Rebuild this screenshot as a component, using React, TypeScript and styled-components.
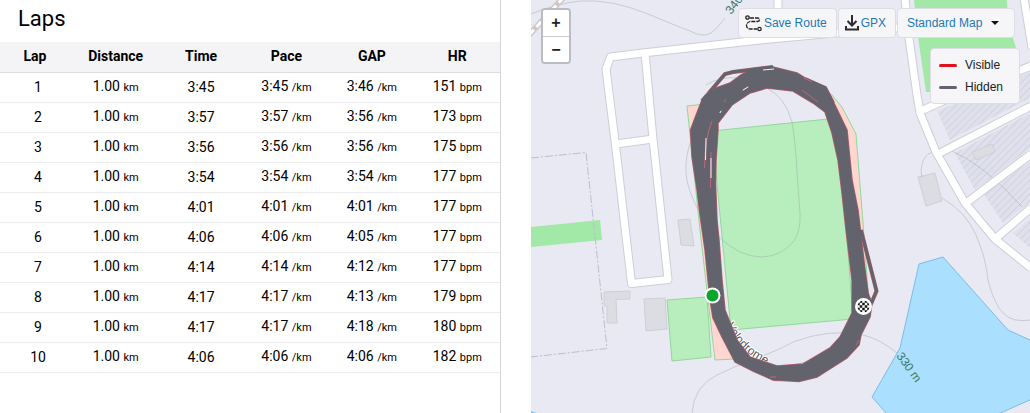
import React from 'react';
import styled, { createGlobalStyle } from 'styled-components';

interface Lap {
  time: string;
  gap: string;
  heartRate: number;
}

const LAPS: Lap[] = [
  { time: '3:45', gap: '3:46', heartRate: 151 },
  { time: '3:57', gap: '3:56', heartRate: 173 },
  { time: '3:56', gap: '3:56', heartRate: 175 },
  { time: '3:54', gap: '3:54', heartRate: 177 },
  { time: '4:01', gap: '4:01', heartRate: 177 },
  { time: '4:06', gap: '4:05', heartRate: 177 },
  { time: '4:14', gap: '4:12', heartRate: 177 },
  { time: '4:17', gap: '4:13', heartRate: 179 },
  { time: '4:17', gap: '4:18', heartRate: 180 },
  { time: '4:06', gap: '4:06', heartRate: 182 },
];

const COLUMNS = ['Lap', 'Distance', 'Time', 'Pace', 'GAP', 'HR'];

const GlobalStyle = createGlobalStyle`
  *, *::before, *::after {
    box-sizing: border-box;
  }

  body {
    margin: 0;
    background-color: #fff;
    color: #000;
    font-family: Roboto, 'Liberation Sans', sans-serif;
  }
`;

const Page = styled.main`
  display: grid;
  grid-template-columns: minmax(0, 501fr) minmax(0, 499fr);
  column-gap: 30px;
  min-height: 100vh;
`;

const LapsPanel = styled.section`
  border-right: 1px solid #d3d3da;
`;

const Heading = styled.h2`
  margin: 0;
  padding: 4px 18px 8px;
  font-size: 22px;
  line-height: 30px;
  font-weight: 400;
`;

const Table = styled.table`
  width: 100%;
  border-collapse: separate;
  border-spacing: 0;
  table-layout: fixed;
  font-size: 14px;
  text-align: center;
`;

const HeaderCell = styled.th<{ $first?: boolean }>`
  width: ${(props) => (props.$first ? '73px' : 'auto')};
  height: 31px;
  padding: ${(props) => (props.$first ? '0 3px 2px 0' : '0 0 2px')};
  border-bottom: 1px solid #dcdce2;
  background-color: #f4f4f7;
  line-height: 20px;
  font-weight: 700;
`;

const Cell = styled.td<{ $first?: boolean }>`
  height: 30px;
  padding: ${(props) => (props.$first ? '0 0 2px 3px' : '0 0 2px')};
  border-bottom: 1px solid #ececef;
  line-height: 20px;
`;

const Unit = styled.small`
  font-size: 11px;
`;

const MapPanel = styled.section`
  position: relative;
  overflow: hidden;
  background-color: #e8e9f2;
  font-family: 'Liberation Sans', Arial, sans-serif;
  font-size: 12px;
`;

const MapCanvas = styled.svg`
  display: block;
  width: 100%;
  height: 100%;
`;

const ZoomControl = styled.div`
  position: absolute;
  top: 8px;
  left: 10px;
  display: flex;
  flex-direction: column;
  border: 2px solid #bcbdc4;
  border-radius: 4px;
  overflow: hidden;
`;

const ZoomButton = styled.button`
  width: 26px;
  height: 26px;
  padding: 0;
  border: 0;
  background-color: #fff;
  color: #222;
  font: bold 16px/24px 'Liberation Sans', Arial, sans-serif;
  cursor: pointer;

  & + & {
    border-top: 1px solid #ccc;
  }
`;

const Toolbar = styled.div`
  position: absolute;
  top: 8px;
  right: 15px;
  display: flex;
  gap: 1px;
`;

const ToolButton = styled.button`
  display: flex;
  align-items: center;
  gap: 2px;
  height: 30px;
  padding: 0 9px 0 6px;
  border: 1px solid #dcdde5;
  border-radius: 4px;
  background-color: #f6f6f9;
  color: #2378b4;
  font: 12px/18px 'Liberation Sans', Arial, sans-serif;
  text-decoration: none;
  cursor: pointer;
`;

const SelectWrapper = styled.div`
  display: grid;
  align-items: center;

  > * {
    grid-area: 1 / 1;
  }
`;

const MapSelect = styled.select`
  appearance: none;
  width: 118px;
  height: 30px;
  padding: 0 24px 0 9px;
  border: 1px solid #dcdde5;
  border-radius: 4px;
  background-color: #f6f6f9;
  color: #2378b4;
  font: 12px/18px 'Liberation Sans', Arial, sans-serif;
  cursor: pointer;
`;

const Caret = styled.svg`
  justify-self: end;
  margin-right: 16px;
  pointer-events: none;
`;

const Legend = styled.ul`
  position: absolute;
  top: 48px;
  right: 10px;
  width: 90px;
  margin: 0;
  padding: 5px 8px;
  border: 1px solid #dcdde5;
  border-radius: 4px;
  background-color: #f6f6f9;
  color: #222;
  list-style: none;
`;

const LegendItem = styled.li<{ $color: string }>`
  display: flex;
  align-items: center;
  gap: 8px;
  line-height: 22px;

  &::before {
    content: '';
    width: 18px;
    height: 3px;
    border-radius: 2px;
    background-color: ${(props) => props.$color};
  }
`;

const ROADS = [
  'M645 53L653 139L668 279.5L631.5 283.5L615.5 145L606 69L610.5 57L645 52.7L760 40L830 33.5L908 27',
  'M616 144L653 139',
  'M778 0V38',
  'M1024 -2L1032 48',
  'M921 111L943 101L1031 66',
  'M938 154L1031 106',
  'M966 203L1031 154',
  'M995 239L1031 208',
  'M905 -2L909 38L917 95L920 113L936 152L965 203L995 239L1031 268',
];

const CONTOURS = [
  'M531 14Q555 4 580 1Q612 -1 648 14T690 31Q703 38 711 33Q718 28 725 18',
  'M719 237Q740 257 762 257Q782 256 794 241Q801 230 800 213L797 173Q796 145 792 122Q785 97 768 89',
  'M700 213Q687 190 686 173Q685 155 692 138M706 85Q720 76 740 78',
  'M692 413Q694 386 717 375Q735 366 757 358T793 342Q830 328 863 335Q880 339 897 353',
  'M932 152Q923 156 922 165Q920 170 922 177M942 198Q966 212 976 235T988 280Q994 304 1003 313Q1012 323 1031 320',
  'M950 150Q985 165 1022 207',
];

const PARKING = [
  'M937 111L1030 72V98L950 140Z',
  'M955 153L1030 113V148L975 190Z',
  'M983 193L1030 162V202L1003 223Z',
  'M1013 233L1030 219V248Z',
];

const BUILDINGS = [
  'M678 220L690 219L694 246L681 245Z',
  'M604 292L630 291V299L616 299.500L617 323H607V306H604Z',
  'M644 299L665 298L667 329L646 331Z',
  'M918 177L935 173L942 201L926 206Z',
  'M972 152L992 144L995 152L976 160Z',
];

// Band covered by all laps: outer edge first, then the inner edge as a hole
const TRACK =
  'M730 83L741 75L750 70L773 67L797 73L805 78L826 87L832 99L847 130L849 150L852 180L858 210L861 235L865 270L868 293L872 303L870 317L861 335L859 345L847 358L817 377L799 381.500L773 380L753 371L735 362L722 337L713 318L710 300L705 250L700 215L697 190L692 157L690.500 130L695 118L702 100L716 88Z' +
  'M718 130L718 123L732 105L750 93L767 88L793 91L813 103L825 112L832 133L838 160L842 193L846 230L852 280L852 313L840 337L830 348L803 364L777 366L750 357L737 340L725 310L722 280L719 240L717 220L715.500 183L716 160Z';

const STRAY_LAPS = 'M702 101L725 74L733 72L773 67M861 230L876.500 291L871 304M858 232L868 302M805 79L825 88L833 103';

const MapView = function () {
  return (
    <MapCanvas viewBox="531 0 499 413" preserveAspectRatio="xMidYMid slice" role="img" aria-label="Route map">
      <defs>
        <pattern id="hatch" width="5" height="5" patternUnits="userSpaceOnUse" patternTransform="rotate(45)">
          <rect width="5" height="5" fill="#dfe0eb" />
          <path d="M0 0V5" stroke="#c3c5da" strokeWidth="1" />
        </pattern>
        <clipPath id="finish">
          <circle cx="863.500" cy="306.500" r="6" />
        </clipPath>
        <path id="street" d="M726 325Q741 357 780 370" />
      </defs>

      <rect x="531" width="499" height="413" fill="#e8e9f2" />
      <path d="M914 0H1007L1008 22L1016 48V92H926L918 37Z" fill="#a2e8a7" />
      <path d="M531 227L600 220L602 240L531 247Z" fill="#a2e8a7" />
      <path d="M531 158L586 152.500L607 348.500L531 357" fill="none" stroke="#bcbdd2" strokeDasharray="8 2 2 2" />

      <g fill="url(#hatch)">
        {PARKING.map((d) => (
          <path key={d} d={d} />
        ))}
      </g>

      <path
        d="M919 264L943 257L1008 330L1032 341V399L998 414H887L872 397L900 348Z"
        fill="#aae0fe"
        stroke="#79bdec"
      />
      <path d="M531 411L537 413H531Z" fill="#79c8f4" />

      <path
        fill="#ffd6d0"
        stroke="#8edb95"
        d="M687 106L706 104L740 80L775 75L815 85L832 95L842 107L856 134L863 223L868 290L860 320L835 360L800 379L775 381L753 371L733 359L715 360L700 230Z"
      />
      <path
        fill="#e8e9f2"
        d="M705 130L725 98L770 78L817 98L836 120L847 170L855 250L857 310L830 355L790 372L750 364L730 340L716 305L708 220Z"
      />
      <g fill="#b8eebd" stroke="#92d79a">
        <path d="M712 131L838 118L853 319L731 330Z" />
        <path d="M667 300L707 297L711 357L672 361Z" />
      </g>

      <g fill="#dcdde2" stroke="#cfd0d6">
        {BUILDINGS.map((d) => (
          <path key={d} d={d} />
        ))}
      </g>

      <g fill="none" stroke="#8f9e9c" strokeOpacity="0.38">
        {CONTOURS.map((d) => (
          <path key={d} d={d} />
        ))}
      </g>

      <g fill="none" stroke="#cdced7" strokeWidth="9" strokeLinejoin="round">
        {ROADS.map((d) => (
          <path key={d} d={d} />
        ))}
      </g>
      <g fill="none" stroke="#fff" strokeWidth="7" strokeLinejoin="round">
        {ROADS.map((d) => (
          <path key={d} d={d} />
        ))}
      </g>

      <g fill="none">
        <path d="M529 35L564 -3" stroke="#cfc7c9" strokeWidth="6" />
        <path d="M529 35L564 -3" stroke="#fff" strokeWidth="3" strokeDasharray="7 4" />
      </g>

      <g fill="#3d7764">
        <text transform="translate(731 15) rotate(-52)">340 m</text>
        <text transform="translate(896 356) rotate(54)">330 m</text>
      </g>
      <text fill="#55565c" stroke="#fff" strokeWidth="2" paintOrder="stroke">
        <textPath href="#street">Velodrome</textPath>
      </text>

      <path d="M745 358Q775 372 806 362" fill="none" stroke="#d9c3c6" />
      <path d={STRAY_LAPS} fill="none" stroke="#b4606b" strokeWidth="4" />
      <path d={TRACK} fill="#62636d" fillRule="evenodd" stroke="#b4606b" strokeWidth="1.500" />
      <path d={TRACK} fill="#62636d" fillRule="evenodd" />
      <path d={STRAY_LAPS} fill="none" stroke="#62636d" strokeWidth="3" />
      <g fill="none" stroke="#c06873">
        <path d="M712 121Q705 137 704.500 168M711 152L710.500 188" />
        <path d="M742 91L749 86.500M802 90L818 102M719 113L722 110M724 102L726 99M705 95L708 92M856 345L859 340M770 377H776M804 78L812 82" />
      </g>
      <path
        d="M706 138L705.500 160M711 158V178M743 90L748 87M720 113L721 111M763 70L774 69"
        fill="none"
        stroke="#f4f2f7"
      />

      <circle cx="712.500" cy="295.500" r="8" fill="#fff" />
      <circle cx="712.500" cy="295.500" r="6" fill="#0aa62c" />
      <circle cx="863.500" cy="306.500" r="8.500" fill="#fff" />
      <g clipPath="url(#finish)">
        {[0, 1, 2, 3, 4].map((row) => (
          <path
            key={row}
            d={`M${row % 2 ? 857.25 : 854.75} ${301.5 + row * 2.5}h15`}
            stroke="#111"
            strokeWidth="2.500"
            strokeDasharray="2.500 2.500"
          />
        ))}
      </g>
    </MapCanvas>
  );
};

const RouteIcon = function () {
  return (
    <svg width="17" height="17" viewBox="0 0 17 17" fill="none" stroke="#222" strokeWidth="1.300" aria-hidden="true">
      <circle cx="2.500" cy="2.500" r="1.700" />
      <circle cx="14.500" cy="14" r="1.700" />
      <path d="M5 3H12.500Q14.500 3 14.500 4.700T12.500 6.500H5Q1.500 7.500 1.500 10.500T5 14H12" strokeDasharray="4 1" />
    </svg>
  );
};

const DownloadIcon = function () {
  return (
    <svg width="14" height="16" viewBox="0 0 14 16" fill="none" stroke="#2b2b2f" strokeWidth="2" aria-hidden="true">
      <path d="M7 0V10M2.500 6L7 10.500L11.500 6M1 11V14.500H13V11" />
    </svg>
  );
};

const LapsTable = function () {
  return (
    <Table>
      <thead>
        <tr>
          {COLUMNS.map((column, index) => (
            <HeaderCell key={column} scope="col" $first={index === 0}>
              {column}
            </HeaderCell>
          ))}
        </tr>
      </thead>
      <tbody>
        {LAPS.map((lap, index) => (
          <tr key={index}>
            <Cell $first>{index + 1}</Cell>
            <Cell>
              1.00 <Unit>km</Unit>
            </Cell>
            <Cell>{lap.time}</Cell>
            <Cell>
              {lap.time} <Unit>/km</Unit>
            </Cell>
            <Cell>
              {lap.gap} <Unit>/km</Unit>
            </Cell>
            <Cell>
              {lap.heartRate} <Unit>bpm</Unit>
            </Cell>
          </tr>
        ))}
      </tbody>
    </Table>
  );
};

const App: React.FC = function () {
  return (
    <>
      <GlobalStyle />
      <Page>
        <LapsPanel>
          <Heading>Laps</Heading>
          <LapsTable />
        </LapsPanel>
        <MapPanel>
          <MapView />
          <ZoomControl>
            <ZoomButton type="button" aria-label="Zoom in">
              +
            </ZoomButton>
            <ZoomButton type="button" aria-label="Zoom out">
              −
            </ZoomButton>
          </ZoomControl>
          <Toolbar>
            <ToolButton type="button">
              <RouteIcon />
              Save Route
            </ToolButton>
            <ToolButton as="a" href="#gpx">
              <DownloadIcon />
              GPX
            </ToolButton>
            <SelectWrapper>
              <MapSelect aria-label="Map style">
                <option>Standard Map</option>
              </MapSelect>
              <Caret width="8" height="4" viewBox="0 0 8 4" aria-hidden="true">
                <path d="M0 0H8L4 4Z" fill="#111" />
              </Caret>
            </SelectWrapper>
          </Toolbar>
          <Legend>
            <LegendItem $color="#e0101c">Visible</LegendItem>
            <LegendItem $color="#62636d">Hidden</LegendItem>
          </Legend>
        </MapPanel>
      </Page>
    </>
  );
};

export default App;
